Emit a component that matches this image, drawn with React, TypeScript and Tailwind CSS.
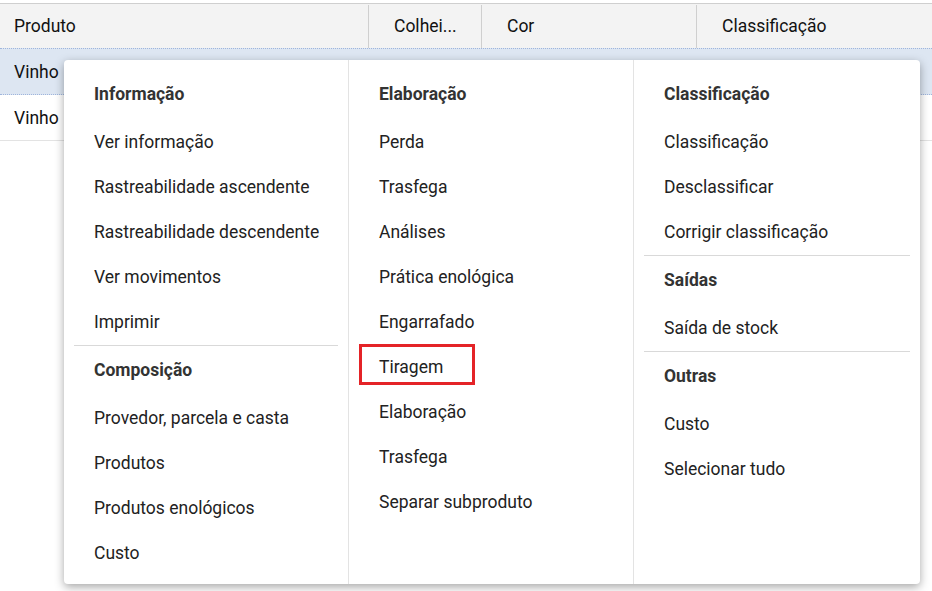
import React from "react";

type Entry = { kind: "header" | "item" | "divider"; label?: string; marked?: boolean };

const h = (label: string): Entry => ({ kind: "header", label });
const i = (label: string, marked = false): Entry => ({ kind: "item", label, marked });
const d: Entry = { kind: "divider" };

const columns: Entry[][] = [
  [
    h("Informação"),
    i("Ver informação"),
    i("Rastreabilidade ascendente"),
    i("Rastreabilidade descendente"),
    i("Ver movimentos"),
    i("Imprimir"),
    d,
    h("Composição"),
    i("Provedor, parcela e casta"),
    i("Produtos"),
    i("Produtos enológicos"),
    i("Custo"),
  ],
  [
    h("Elaboração"),
    i("Perda"),
    i("Trasfega"),
    i("Análises"),
    i("Prática enológica"),
    i("Engarrafado"),
    i("Tiragem", true),
    i("Elaboração"),
    i("Trasfega"),
    i("Separar subproduto"),
  ],
  [
    h("Classificação"),
    i("Classificação"),
    i("Desclassificar"),
    i("Corrigir classificação"),
    d,
    h("Saídas"),
    i("Saída de stock"),
    d,
    h("Outras"),
    i("Custo"),
    i("Selecionar tudo"),
  ],
];

function MenuEntry({ e }: { e: Entry }) {
  if (e.kind === "divider") {
    return <div className="mx-[10px] mt-[1px] h-px bg-[#d9d9d9]" />;
  }
  if (e.kind === "header") {
    return (
      <div className="h-[49px] pl-[30px] pt-[14px] text-[17.5px] leading-5 font-bold text-[#333333]">
        {e.label}
      </div>
    );
  }
  return (
    <div className="relative flex h-[45px] items-center pl-[30px] pt-[2px] text-[17.5px] text-[#222222]">
      {e.marked && (
        <div className="absolute left-[10px] top-0 h-[41px] w-[116px] border-[3px] border-[#e42327]" />
      )}
      <span className="relative">{e.label}</span>
    </div>
  );
}

export default function App() {
  return (
    <div
      className="relative h-[591px] w-[932px] overflow-hidden bg-white"
      style={{ fontFamily: "Roboto, 'Liberation Sans', sans-serif" }}
    >
      <div className="h-[3px]" />
      {/* grid header */}
      <div className="flex h-[45px] border-t border-[#cfcfcf] bg-[#f3f3f3] pt-px text-[17.5px] text-[#111111]">
        <div className="flex w-[368px] items-center pl-[14px]">Produto</div>
        <div className="flex w-[113px] items-center border-l border-[#cfcfcf] pl-[25px]">Colhei...</div>
        <div className="flex w-[215px] items-center border-l border-[#cfcfcf] pl-[25px]">Cor</div>
        <div className="flex flex-1 items-center border-l border-[#cfcfcf] pl-[25px]">Classificação</div>
      </div>
      {/* grid rows */}
      <div className="flex h-[47px] items-center border-y border-dotted border-[#9fb5dc] bg-[#dde6f2] pl-[14px] pt-[2px] text-[17.5px] text-[#111111]">
        Vinho
      </div>
      <div className="flex h-[46px] items-center border-b border-[#e3e3e3] pl-[14px] pt-[2px] text-[17.5px] text-[#111111]">
        Vinho
      </div>

      {/* context menu */}
      <div className="absolute left-[64px] top-[60px] flex h-[524px] w-[856px] rounded-[4px] bg-white shadow-[0_3px_10px_rgba(0,0,0,0.35)]">
        {columns.map((col, ci) => (
          <div
            key={ci}
            className={
              ci === 0
                ? "w-[284px] pt-[10px]"
                : ci === 1
                ? "w-[285px] border-l border-[#e3e3e3] pt-[10px]"
                : "flex-1 border-l border-[#e3e3e3] pt-[10px]"
            }
          >
            {col.map((e, ei) => (
              <MenuEntry key={ei} e={e} />
            ))}
          </div>
        ))}
      </div>
    </div>
  );
}
